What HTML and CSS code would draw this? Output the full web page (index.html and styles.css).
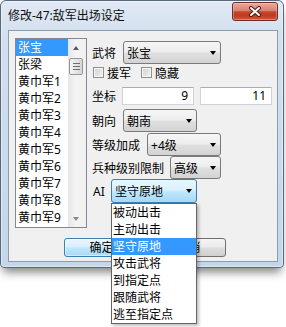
FILE: index.html
```html
<!DOCTYPE html>
<html lang="zh-CN">
<head>
    <meta charset="UTF-8">
    <meta name="viewport" content="width=device-width, initial-scale=1.0">
    <title>修改-47:敌军出场设定</title>
    <link rel="stylesheet" href="styles.css">
</head>
<body>

    <div class="window">
        <div class="titlebar">
            <span class="title">修改-47:敌军出场设定</span>
            <div class="close-btn">
                <svg width="14" height="11" viewBox="0 0 14 11">
                    <path d="M3 2 L11 9 M11 2 L3 9" stroke="#4a1c14" stroke-width="4" stroke-linecap="round"/>
                    <path d="M3 2 L11 9 M11 2 L3 9" stroke="#ffffff" stroke-width="2" stroke-linecap="round"/>
                </svg>
            </div>
        </div>

        <div class="client">
            <div class="main">
                <!-- General list -->
                <div class="listbox">
                    <ul class="list-items">
                        <li class="selected">张宝</li>
                        <li>张梁</li>
                        <li>黄巾军1</li>
                        <li>黄巾军2</li>
                        <li>黄巾军3</li>
                        <li>黄巾军4</li>
                        <li>黄巾军5</li>
                        <li>黄巾军6</li>
                        <li>黄巾军7</li>
                        <li>黄巾军8</li>
                        <li>黄巾军9</li>
                    </ul>
                    <div class="scrollbar">
                        <div class="scroll-btn"><i class="tri-up"></i></div>
                        <div class="scroll-track">
                            <div class="scroll-thumb">
                                <svg width="7" height="7" viewBox="0 0 7 7">
                                    <path d="M0 0.5 H7 M0 3.5 H7 M0 6.5 H7" stroke="#6f6f6f" stroke-width="1"/>
                                </svg>
                            </div>
                        </div>
                        <div class="scroll-btn"><i class="tri-down"></i></div>
                    </div>
                </div>

                <!-- Settings -->
                <div class="form">
                    <div class="row row-general">
                        <span class="label">武将</span>
                        <div class="combo combo-general"><span>张宝</span><i class="arrow"></i></div>
                    </div>

                    <div class="row row-checks">
                        <div class="check"><span class="box"></span>援军</div>
                        <div class="check check-hide"><span class="box"></span>隐藏</div>
                    </div>

                    <div class="row row-coords">
                        <span class="label label-tight">坐标</span>
                        <div class="textbox">9</div>
                        <div class="textbox">11</div>
                    </div>

                    <div class="row row-facing">
                        <span class="label">朝向</span>
                        <div class="combo combo-facing"><span>朝南</span><i class="arrow"></i></div>
                    </div>

                    <div class="row row-bonus">
                        <span class="label">等级加成</span>
                        <div class="combo combo-bonus"><span>+4级</span><i class="arrow"></i></div>
                    </div>

                    <div class="row row-limit">
                        <span class="label label-tight">兵种级别限制</span>
                        <div class="combo combo-limit"><span>高级</span><i class="arrow"></i></div>
                    </div>

                    <div class="row row-ai">
                        <span class="label label-ai">AI</span>
                        <div class="combo combo-ai focused">
                            <span>坚守原地</span><i class="arrow"></i>
                            <ul class="dropdown">
                                <li>被动出击</li>
                                <li>主动出击</li>
                                <li class="selected">坚守原地</li>
                                <li>攻击武将</li>
                                <li>到指定点</li>
                                <li>跟随武将</li>
                                <li>逃至指定点</li>
                            </ul>
                        </div>
                    </div>
                </div>
            </div>

            <div class="buttons">
                <div class="btn btn-default">确定</div>
                <div class="btn">取消</div>
            </div>
        </div>
    </div>

</body>
</html>
```

FILE: styles.css
```css
html {
    height: 100%;
}

body {
    margin: 0;
    min-height: 327px;
    background-color: #fff;
    font-family: "Noto Sans", "Noto Sans CJK SC", sans-serif;
    font-size: 12px;
    color: #000;
}

.window {
    position: relative;
    width: 284px;
    height: 268px;
    box-sizing: border-box;
    padding: 0 5px 5px 7px;
    border: 1px solid #56687d;
    border-radius: 6px 6px 4px 4px;
    background: linear-gradient(#e1e9f4, #d2dfee 40px, #c4d6ea);
    box-shadow: inset 0 0 0 1px rgba(255, 255, 255, 0.45), 0 7px 10px -3px rgba(0, 0, 0, 0.5);
}

/* Title bar */
.titlebar {
    display: flex;
    justify-content: space-between;
    height: 29px;
}

.title {
    line-height: 29px;
    color: #111;
}

.close-btn {
    width: 46px;
    height: 19px;
    margin-top: 1px;
    box-sizing: border-box;
    border: 1px solid #6e2e24;
    border-radius: 3px;
    background: linear-gradient(#eaaa9c 0%, #d98270 45%, #c6452c 52%, #c13a22 75%, #d25a3c 100%);
    box-shadow: inset 0 0 0 1px rgba(255, 220, 210, 0.35);
    display: flex;
    align-items: center;
    justify-content: center;
}

/* Client area */
.client {
    width: 270px;
    height: 232px;
    box-sizing: border-box;
    border: 1px solid #8b9cb1;
    background-color: #f0f0f0;
}

.main {
    display: flex;
}

.listbox {
    display: flex;
    width: 72px;
    height: 190px;
    margin: 7px 0 0 6px;
    box-sizing: border-box;
    border: 1px solid #828790;
    background-color: #fff;
}

.list-items {
    list-style: none;
    margin: 0;
    padding: 0;
    width: 52px;
}

.list-items li {
    height: 17px;
    line-height: 17px;
    padding-left: 2px;
    white-space: nowrap;
    overflow: hidden;
}

.list-items li.selected {
    background-color: #3399ff;
    color: #fff;
}

.scrollbar {
    width: 18px;
    display: flex;
    flex-direction: column;
    background: linear-gradient(90deg, #e6e6e6, #f4f4f4 45%, #f0f0f0);
}

.scroll-btn {
    height: 17px;
    display: flex;
    align-items: center;
    justify-content: center;
}

.tri-up,
.tri-down {
    width: 0;
    height: 0;
    margin-right: 2px;
    border-left: 3px solid transparent;
    border-right: 3px solid transparent;
}

.tri-up {
    border-bottom: 4px solid #5a5a5a;
}

.tri-down {
    border-top: 4px solid #8a8a8a;
}

.scroll-track {
    flex: 1;
    padding-top: 2px;
}

.scroll-thumb {
    height: 17px;
    margin: 0 3px 0 1px;
    box-sizing: border-box;
    border: 1px solid #979797;
    border-radius: 2px;
    background: linear-gradient(90deg, #f4f4f4, #e6e6e6 50%, #d6d6d6);
    display: flex;
    align-items: center;
    justify-content: center;
}

/* Settings form */
.form {
    margin: 10px 0 0 5px;
}

.row {
    display: flex;
    align-items: center;
}

.label {
    margin-right: 7px;
    white-space: nowrap;
}

.label-tight {
    margin-right: 6px;
}

.label-ai {
    width: 18px;
    margin-right: 0;
    padding-left: 1px;
}

.row-checks {
    height: 13px;
    margin-top: 2px;
    padding-left: 1px;
}

.row-coords {
    margin-top: 8px;
}

.row-facing {
    margin-top: 4px;
}

.row-bonus {
    margin-top: 1px;
}

.combo {
    position: relative;
    height: 23px;
    box-sizing: border-box;
    padding: 0 4px 0 3px;
    border: 1px solid #7a7a7a;
    border-radius: 3px;
    background: linear-gradient(#f6f6f6, #ededed 45%, #dfdfdf 55%, #d3d3d3);
    display: flex;
    align-items: center;
    justify-content: space-between;
    white-space: nowrap;
}

.combo-general { width: 98px; }
.combo-facing { width: 74px; }
.combo-bonus { width: 74px; }
.combo-limit { width: 51px; }

.combo-ai {
    width: 86px;
    height: 24px;
}

.combo.focused {
    border-color: #3c7fb1;
    background: linear-gradient(#eaf6fd, #d9f0fc 45%, #bee6fd 55%, #a7d9f5);
}

.arrow {
    width: 0;
    height: 0;
    border-left: 3px solid transparent;
    border-right: 3px solid transparent;
    border-top: 4px solid #000;
}

.check {
    display: flex;
    align-items: center;
}

.check-hide {
    margin-left: 10px;
}

.box {
    width: 11px;
    height: 11px;
    margin-right: 3px;
    box-sizing: border-box;
    border: 1px solid #8e8f8f;
    background: linear-gradient(135deg, #cfd2d6, #f3f3f3);
    box-shadow: inset 0 0 0 1px #f6f6f6;
}

.textbox {
    width: 72px;
    height: 18px;
    box-sizing: border-box;
    padding-right: 5px;
    border: 1px solid #cfd3da;
    border-top-color: #abadb3;
    background-color: #fff;
    text-align: right;
    line-height: 16px;
}

.textbox + .textbox {
    margin-left: 6px;
}

/* Open AI list */
.dropdown {
    position: absolute;
    top: calc(100% + 1px);
    left: -1px;
    z-index: 10;
    width: 86px;
    height: 121px;
    margin: 0;
    padding: 0;
    list-style: none;
    box-sizing: border-box;
    border: 1px solid #646464;
    background-color: #fff;
    box-shadow: 2px 2px 3px rgba(0, 0, 0, 0.25);
}

.dropdown li {
    height: 17px;
    line-height: 17px;
    padding-left: 1px;
}

.dropdown li.selected {
    background-color: #3399ff;
    color: #fff;
}

/* Bottom buttons */
.buttons {
    display: flex;
    gap: 12px;
    margin: 10px 0 0 55px;
}

.btn {
    width: 75px;
    height: 19px;
    box-sizing: border-box;
    border: 1px solid #707070;
    border-radius: 3px;
    background: linear-gradient(#f4f4f4, #ebebeb 45%, #dddddd 55%, #cfcfcf);
    text-align: center;
    line-height: 17px;
}

.btn-default {
    border-color: #3c7fb1;
    background: linear-gradient(#eaf6fd, #d9f0fc 45%, #bee6fd 55%, #a7d9f5);
    box-shadow: inset 0 0 0 1px rgba(255, 255, 255, 0.5);
}
```
